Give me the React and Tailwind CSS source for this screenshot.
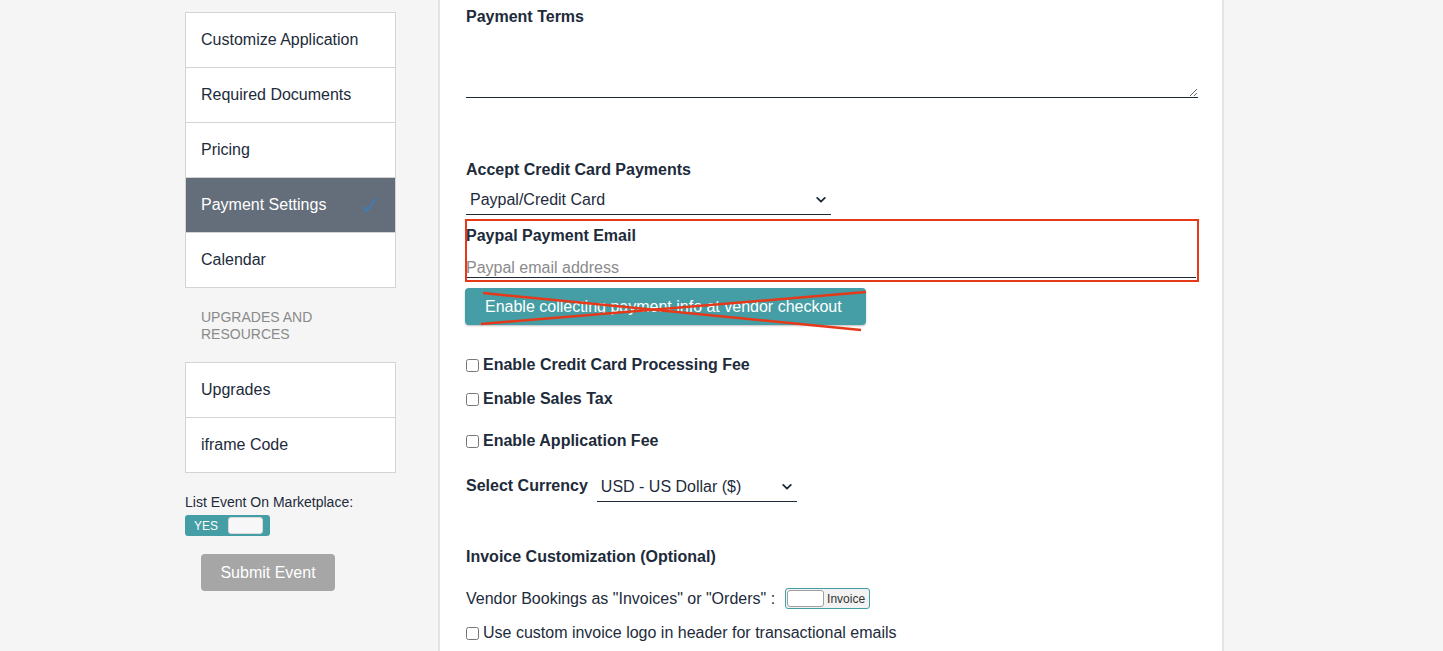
import React from "react";

const Chevron = () => (
  <svg width="10" height="7" viewBox="0 0 10 7" className="absolute right-[5px] top-1/2 -translate-y-1/2 pointer-events-none">
    <path d="M1.2 1.4 L5 5.2 L8.8 1.4" fill="none" stroke="#1d2b3b" strokeWidth="1.8" strokeLinecap="round" strokeLinejoin="round" />
  </svg>
);

const Check = () => (
  <svg width="18" height="18" viewBox="0 0 18 18" className="absolute right-[17px] top-1/2 -translate-y-1/2">
    <path d="M2.5 10.5 L6.5 15.5 L16 3" fill="none" stroke="#3a7fbf" strokeWidth="1.6" strokeLinecap="round" strokeLinejoin="round" />
  </svg>
);

function NavItem({ label, active }) {
  return (
    <div
      className={
        "relative h-[55px] last:h-[54px] flex items-center pl-[15px] text-[16px] " +
        (active ? "bg-[#636e7a] text-white" : "bg-white text-[#1d2b3b]")
      }
    >
      {label}
      {active && <Check />}
    </div>
  );
}

function CheckRow({ label, bold, className }) {
  return (
    <label className={"flex items-center h-[20px] " + (className || "")}>
      <input type="checkbox" className="w-[13px] h-[13px] m-0 mr-[4px] shrink-0" />
      <span className={(bold ? "font-bold " : "") + "text-[16px] leading-[20px] text-[#1d2b3b]"}>{label}</span>
    </label>
  );
}

export default function App() {
  return (
    <div className="min-h-[651px] h-[651px] overflow-hidden bg-[#f5f5f5] flex font-['Liberation_Sans',Arial,sans-serif] text-[#1d2b3b]">
      {/* Sidebar */}
      <div className="ml-[185px] w-[211px] shrink-0 pt-[12px]">
        <div className="border border-[#d4d4d4] divide-y divide-[#d4d4d4] bg-white">
          <NavItem label="Customize Application" />
          <NavItem label="Required Documents" />
          <NavItem label="Pricing" />
          <NavItem label="Payment Settings" active />
          <NavItem label="Calendar" />
        </div>
        <div className="mt-[21px] pl-[16px] text-[14px] leading-[17px] text-[#8a8a8a] uppercase">
          Upgrades and
          <br />
          Resources
        </div>
        <div className="mt-[19px] border border-[#d4d4d4] divide-y divide-[#d4d4d4] bg-white">
          <NavItem label="Upgrades" />
          <NavItem label="iframe Code" />
        </div>
        <div className="mt-[21px] text-[14px] leading-[17px] text-[#1d2b3b]">List Event On Marketplace:</div>
        <div className="mt-[4px] w-[85px] h-[21px] rounded-[3px] bg-[#459ea5] flex items-center pl-[9px] pr-[7px] justify-between">
          <span className="text-white text-[12px] leading-none">YES</span>
          <span className="w-[35px] h-[17px] bg-[#f7f7f7] rounded-[3px] border border-[#d9d9d9]"></span>
        </div>
        <button className="mt-[18px] ml-[16px] w-[134px] h-[37px] rounded-[4px] bg-[#a6a6a6] text-white text-[16px] flex items-center justify-center">
          Submit Event
        </button>
      </div>

      {/* Main panel */}
      <div className="ml-[42px] w-[786px] shrink-0 bg-white border-l-2 border-r-2 border-[#e3e3e3] pl-[26px] pr-[24px]">
        <div className="mt-[7px] font-bold text-[16px] leading-[20px]">Payment Terms</div>
        <textarea className="block w-full h-[71px] mt-0 border-0 border-b border-[#1d2b3b] outline-none bg-white p-0"></textarea>

        <div className="mt-[62px] font-bold text-[16px] leading-[20px]">Accept Credit Card Payments</div>
        <div className="relative mt-[5px] w-[365px] h-[30px] border-b border-[#1d2b3b]">
          <select className="appearance-none w-full h-full bg-transparent pl-[4px] text-[16px] text-[#1d2b3b] outline-none border-0">
            <option>Paypal/Credit Card</option>
          </select>
          <Chevron />
        </div>

        <div className="relative mt-[11px]">
          <div className="font-bold text-[16px] leading-[20px]">Paypal Payment Email</div>
          <input
            type="text"
            placeholder="Paypal email address"
            className="block mt-[12px] w-[730px] h-[20px] p-0 border-0 border-b border-[#1d2b3b] outline-none text-[16px] leading-[19px] placeholder:text-[#8a8a8a]"
          />
          <div className="absolute -left-[1px] -top-[7px] w-[734px] h-[63px] border-2 border-[#e5391a] pointer-events-none"></div>
        </div>

        <div className="relative mt-[10px] w-[401px] -ml-[1px]">
          <button className="w-[401px] h-[37px] rounded-[4px] bg-[#459ea5] text-white text-[16px] text-left pl-[20px] shadow-[0_1px_2px_rgba(0,0,0,0.25)]">
            Enable collecting payment info at vendor checkout
          </button>
          <svg width="410" height="46" className="absolute left-0 top-0 overflow-visible pointer-events-none">
            <line x1="18" y1="5" x2="396" y2="42" stroke="#e5391a" strokeWidth="2.5" />
            <line x1="16" y1="36" x2="401" y2="4" stroke="#e5391a" strokeWidth="2.5" />
          </svg>
        </div>

        <CheckRow label="Enable Credit Card Processing Fee" bold className="mt-[30px]" />
        <CheckRow label="Enable Sales Tax" bold className="mt-[14px]" />
        <CheckRow label="Enable Application Fee" bold className="mt-[22px]" />

        <div className="mt-[21px] flex items-end h-[30px]">
          <span className="font-bold text-[16px] leading-[20px] mb-[6px]">Select Currency</span>
          <div className="relative ml-[9px] w-[200px] h-[30px] border-b border-[#1d2b3b]">
            <select className="appearance-none w-full h-full bg-transparent pl-[4px] text-[16px] text-[#1d2b3b] outline-none border-0">
              <option>USD - US Dollar ($)</option>
            </select>
            <Chevron />
          </div>
        </div>

        <div className="mt-[45px] font-bold text-[16px] leading-[20px]">Invoice Customization (Optional)</div>

        <div className="mt-[21px] flex items-center h-[21px]">
          <span className="text-[16px] leading-[20px]">Vendor Bookings as "Invoices" or "Orders" :</span>
          <div className="ml-[10px] w-[85px] h-[21px] rounded-[3px] border border-[#459ea5] bg-[#f2f2f2] flex items-center pl-[1px]">
            <span className="w-[37px] h-[17px] bg-white border border-[#a0a0a0] rounded-[3px]"></span>
            <span className="ml-[3px] text-[12px] leading-none text-[#333]">Invoice</span>
          </div>
        </div>

        <CheckRow label="Use custom invoice logo in header for transactional emails" className="mt-[14px]" />
      </div>
    </div>
  );
}
